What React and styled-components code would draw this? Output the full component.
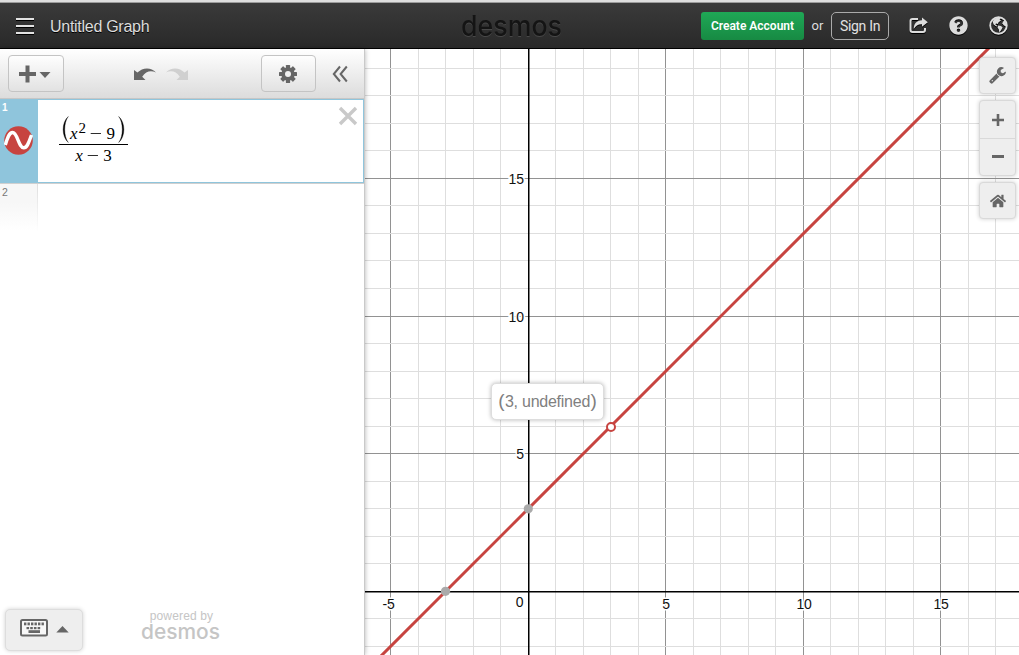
import React from "react";
import styled, { createGlobalStyle } from "styled-components";
import { FaQuestionCircle, FaHome } from "react-icons/fa";

const Global = createGlobalStyle`
  * { box-sizing: border-box; }
  body { margin: 0; overflow: hidden; font-family: "Liberation Sans", Arial, sans-serif; background: #fff; }
  svg { display: block; }
`;

const Page = styled.div`
  display: flex;
  flex-direction: column;
  width: 1019px;
  height: 655px;
  overflow: hidden;
`;

const Header = styled.header`
  height: 49px;
  flex: none;
  display: grid;
  grid-template-columns: 461px 102px 1fr;
  align-items: center;
  border-bottom: 1px solid #000;
  background: linear-gradient(#dedede 2px, #9c9c9c 2px, #9c9c9c 3px, #3a3a3a 3px, #292929 100%);
  color: #ddd;
  padding-top: 3px;
`;

const HeaderLeft = styled.div`
  display: flex;
  align-items: center;
  gap: 16px;
  padding-left: 16px;
`;

const HeaderRight = styled.div`
  display: flex;
  align-items: center;
  justify-content: flex-end;
  padding-right: 11px;
`;

const Burger = styled.div`
  width: 18px;
  height: 16px;
  display: flex;
  flex-direction: column;
  justify-content: space-between;
  span { height: 2px; background: #e2e2e2; box-shadow: 0 1px 0 #000; }
`;

const Title = styled.span`
  font-size: 16px;
  line-height: 20px;
  letter-spacing: -0.28px;
  padding-top: 2px;
  white-space: nowrap;
  text-shadow: 0 1px 0 #000;
`;

const CreateButton = styled.button`
  width: 103px;
  height: 28px;
  padding: 0;
  border: 0;
  border-radius: 3px;
  background: linear-gradient(#1fa856, #178a43);
  color: #fff;
  font: 600 12px Roboto, sans-serif;
  white-space: nowrap;
`;

const Or = styled.span`
  width: 27px;
  text-align: center;
  font: 13px Roboto, sans-serif;
`;

const SignButton = styled.button`
  width: 58px;
  height: 28px;
  padding: 0;
  border: 1px solid #aaa;
  border-radius: 5px;
  background: transparent;
  color: #e2e2e2;
  font: 14px Roboto, sans-serif;
  letter-spacing: -0.3px;
`;

const HeaderIcons = styled.div`
  display: flex;
  align-items: center;
  gap: 21px;
  margin-left: 20px;
  svg { filter: drop-shadow(0 1px 0 #000); }
`;

const Body = styled.main`
  display: flex;
  flex: 1;
  min-height: 0;
`;

const Sidebar = styled.aside`
  width: 365px;
  flex: none;
  display: flex;
  flex-direction: column;
  background: #fff;
  border-right: 1px solid #c9c9c9;
  box-shadow: 0 0 5px rgba(0, 0, 0, 0.3);
  position: relative;
  z-index: 1;
`;

const Toolbar = styled.div`
  height: 50px;
  flex: none;
  display: flex;
  align-items: center;
  padding: 0 16px 0 8px;
  background: linear-gradient(#fff, #dcdcdc);
  border-bottom: 1px solid #c6c6c6;
`;

const ToolButton = styled.button`
  width: ${(p) => p.$width}px;
  height: 37px;
  padding: 0 2px 0 0;
  display: flex;
  align-items: center;
  justify-content: center;
  border: 1px solid #c4c4c4;
  border-radius: 4px;
  background: linear-gradient(#fefefe, #e2e2e2);
`;

const History = styled.div`
  flex: 1;
  display: flex;
  gap: 10px;
  padding: 2px 0 0 70px;
`;

const Collapse = styled.div`
  margin-left: 16px;
`;

const Expression = styled.div`
  height: 84px;
  flex: none;
  display: flex;
  border: 1px solid #8fc5dc;
  border-left: 0;
  box-shadow: 0 1px 0 #d0d0d0;
  position: relative;
`;

const ActiveTab = styled.div`
  width: 38px;
  background: #8fc5dc;
  padding: 2px 0 0 4px;
  display: flex;
  flex-direction: column;
  gap: 12px;
  color: #fff;
  font: bold 10px/12px "Liberation Sans", sans-serif;
`;

const IndexLabel = styled.span`
  display: block;
  margin-left: -2px;
`;

const MathArea = styled.div`
  flex: 1;
  padding: 14px 0 0 21px;
`;

const Fraction = styled.div`
  width: 69px;
  display: flex;
  flex-direction: column;
  align-items: center;
  color: #000;
  font: 17px/20px "Liberation Serif", serif;
  white-space: nowrap;
`;

const Numerator = styled.div`
  width: 100%;
  height: 31px;
  display: flex;
  align-items: center;
  justify-content: space-between;
  padding: 0 3px;
  border-bottom: 1px solid #000;
`;

const NumeratorBody = styled.span`
  padding-top: 9px;
  margin: 0 0 0 -2px;
  sup { font-size: 15px; line-height: 0; vertical-align: 6px; margin-left: 1px; }
`;

const Denominator = styled.div`
  line-height: 21px;
`;

const Op = styled.span`
  display: inline-block;
  margin: 0 6px 0 5px;
  transform: scaleX(1.3);
`;

const Close = styled.div`
  padding: 6px 5px 0 0;
`;

const EmptyTab = styled.div`
  width: 38px;
  height: 48px;
  padding: 3px 0 0 2px;
  color: #777;
  font-size: 10.5px;
  line-height: 12px;
  border-right: 1px solid;
  border-image: linear-gradient(#ddd, #fff) 1;
  background: linear-gradient(#f7f7f7 40%, #fff);
`;

const Footer = styled.div`
  margin-top: auto;
  display: flex;
  align-items: flex-start;
  gap: 58px;
  padding: 0 0 4px 5px;
`;

const KeypadButton = styled.button`
  width: 78px;
  height: 42px;
  padding: 0 0 4px;
  display: flex;
  align-items: center;
  justify-content: center;
  gap: 8px;
  border: 1px solid #ddd;
  border-radius: 5px;
  background: #eee;
  box-shadow: 0 0 4px rgba(0, 0, 0, 0.18);
`;

const Powered = styled.div`
  width: 81px;
  color: #c5c5c5;
  font-size: 12px;
  line-height: 14px;
  letter-spacing: 0.15px;
  text-align: center;
`;

const Logo = styled.svg`
  overflow: visible;
  filter: ${(p) => (p.$shadow ? `drop-shadow(0 1px 0 ${p.$shadow})` : "none")};
  text { font-family: Inter, sans-serif; font-weight: 500; letter-spacing: 0; }
`;

const GraphPaper = styled.section`
  flex: 1;
  position: relative;
  background: #fff;
  overflow: hidden;
`;

const Controls = styled.div`
  position: absolute;
  top: 8px;
  right: 3px;
  width: 37px;
  display: flex;
  flex-direction: column;
  gap: 6px;
`;

const ControlGroup = styled.div`
  border: 1px solid #d9d9d9;
  border-radius: 4px;
  background: #eee;
  box-shadow: 0 0 4px rgba(0, 0, 0, 0.2);
`;

const Control = styled.div`
  height: ${(p) => p.$height || 35}px;
  display: flex;
  align-items: center;
  justify-content: center;
  color: #666;
  & + & { border-top: 1px solid #d9d9d9; }
`;

const Tooltip = styled.div`
  position: absolute;
  left: 126px;
  top: 334px;
  width: 113px;
  height: 37px;
  display: flex;
  align-items: center;
  justify-content: center;
  gap: 0.5px;
  border: 1px solid #ddd;
  border-radius: 5px;
  background: #fff;
  box-shadow: 0 0 4px rgba(0, 0, 0, 0.28);
  color: #808080;
  font-size: 16px;
  letter-spacing: -0.25px;
  white-space: nowrap;
`;

const Paren = styled.span`
  font-size: 19px;
  line-height: 20px;
  letter-spacing: 0;
  margin-top: -2px;
`;

function Wordmark({ width, height, size, baseline, color, shadow }) {
  return (
    <Logo width={width} height={height} $shadow={shadow}>
      <text x="0" y={baseline} fontSize={size} fill={color} textLength={width} lengthAdjust="spacingAndGlyphs">desmos</text>
    </Logo>
  );
}

function ShareIcon() {
  return (
    <svg width="19" height="17" viewBox="0 0 19 17">
      <path d="M9 2H3.5Q1.5 2 1.5 4V13Q1.5 15 3.5 15H14Q16 15 16 13V11" fill="none" stroke="#ddd" strokeWidth="2" />
      <path d="M13 .6L18.8 5.2L13 9.8V7.2C9.2 7 6.8 8.6 4.8 12C4.6 6.8 7.6 3.3 13 3.2Z" fill="#ddd" />
    </svg>
  );
}

function GlobeIcon() {
  return (
    <svg width="19" height="19" viewBox="0 0 19 19">
      <circle cx="9.5" cy="9.5" r="8.3" fill="none" stroke="#ddd" strokeWidth="1.9" />
      <path d="M5 3.2L8.5 1.2L12 1.6L10.6 3.4L12 4.4L9.6 6.2L8.8 8L7 7.6L6.4 8.6L8.2 9.8L7.4 10.4L4.6 8.4L3.6 5.8Z" fill="#ddd" />
      <path d="M9.2 9.6L12 10L13.6 11.6L12.4 13.8L10.4 16.6L9.8 13.6L8.6 11.4Z" fill="#ddd" />
      <path d="M14 5.4L16 4.6L17.6 8.2L16.8 10.6L14.6 9.2L13.4 7.2Z" fill="#ddd" />
    </svg>
  );
}

function WrenchIcon() {
  return (
    <svg width="17" height="17" viewBox="0 0 1683 1683">
      <g transform="translate(10 1420) scale(1 -1)" fill="#666">
        <path fillRule="evenodd" d="M384 64q0 26-19 45t-45 19-45-19-19-45 19-45 45-19 45 19 19 45zM1028 484l-682-682q-37-37-90-37-52 0-91 37L59-90Q21-54 21 0q0 53 38 91l681 681q39-98 114.500-173.500T1028 484zM1662 919q0-39-23-106-47-134-164.500-217.500T1216 512q-185 0-316.500 131.500T768 960t131.500 316.500T1216 1408q58 0 121.500-16.500T1445 1345q16-11 16-28t-16-28l-293-169V896l193-107q5 3 79 48.500t135.500 81T1630 954q15 0 23.500-10t8.500-25z" />
      </g>
    </svg>
  );
}

function HistoryArrow({ flip, color }) {
  return (
    <svg width="22" height="14" viewBox="0 0 22 14">
      <g transform={flip ? "translate(22 0) scale(-1 1)" : undefined}>
        <path d="M0 2L3.4 4.6C8.5-.8 17-1.2 22 4.5C16.8 2.2 12 3.1 8.2 8.7L11.5 12H0Z" fill={color} />
      </g>
    </svg>
  );
}

function GearIcon() {
  return (
    <svg width="20" height="20" viewBox="-10 -10 20 20">
      {[0, 45, 90, 135].map((a) => (
        <rect key={a} x="-2.1" y="-9" width="4.2" height="18" rx=".6" fill="#666" transform={`rotate(${a})`} />
      ))}
      <circle r="6.7" fill="#666" />
      <circle r="3" fill="#f1f1f1" />
    </svg>
  );
}

function KeyboardIcon() {
  return (
    <svg width="28" height="18" viewBox="0 0 28 18">
      <rect x="1" y="1" width="26" height="15.5" rx="1.5" fill="#f7f7f7" stroke="#666" strokeWidth="2" />
      {[4, 7.5, 11, 14.5, 18, 21.5].map((x) => <rect key={x} x={x} y="3.5" width="2.4" height="2.8" fill="#666" />)}
      {[6.5, 10.2, 13.9, 17.6].map((x) => <rect key={x} x={x} y="8" width="2.6" height="2.2" fill="#666" />)}
      <rect x="8.5" y="11.2" width="11.5" height="2.8" fill="#666" />
    </svg>
  );
}

function TallParen({ close }) {
  return (
    <svg width="7" height="27" viewBox="0 0 7 27">
      <path transform={close ? "translate(7 0) scale(-1 1)" : undefined} d="M6.3 .5C-.6 6.5-.6 20.5 6.3 26.5C1.500 20.500 1.500 6.500 6.3.5Z" fill="#000" stroke="#000" strokeWidth=".35" />
    </svg>
  );
}

/* Pixel centre of the grid line for a value on each axis. */
const gx = (n) => Math.floor(163 + 27.5 * n) + 0.5;
const gy = (n) => Math.floor(542.21 - 27.52 * n) + 0.5;
const range = (a, b) => Array.from({ length: b - a + 1 }, (_, i) => a + i);

const Label = styled.text`
  font: 14px "Liberation Sans", sans-serif;
  letter-spacing: -0.2px;
  fill: #111;
  stroke: #fff;
  stroke-width: 3px;
  paint-order: stroke;
`;

function Graph() {
  const stroke = (n) => (n % 5 === 0 ? "#929292" : "#dedede");
  const minorFirst = (a, b) => (a % 5 === 0) - (b % 5 === 0);
  return (
    <svg width="654" height="606">
      {range(-5, 17).sort(minorFirst).map((n) => <path key={`x${n}`} d={`M${gx(n)} 0V606`} stroke={stroke(n)} />)}
      {range(-2, 19).sort(minorFirst).map((n) => <path key={`y${n}`} d={`M0 ${gy(n)}H654`} stroke={stroke(n)} />)}
      {[5, 10, 15].map((n) => <Label key={n} x="158.8" y={gy(n) + 5.5} textAnchor="end">{n}</Label>)}
      {[5, 10, 15].map((n) => <Label key={n} x={gx(n) + 0.5} y="560" textAnchor="middle">{n}</Label>)}
      <Label x="23.6" y="560" textAnchor="middle">-5</Label>
      <Label x="154.6" y="558" textAnchor="middle">0</Label>
      <path d="M163.75 0V606M0 542.75H654" stroke="#000" strokeWidth="1.5" />
      <path d="M13.5 609.5L630.5 -7.5" stroke="#c74440" strokeWidth="3" />
      <circle cx="80.5" cy="542.3" r="4.6" fill="#aaa" />
      <circle cx="163.3" cy="459.8" r="4.6" fill="#aaa" />
      <circle cx="246" cy="378" r="4" fill="#fff" stroke="#c74440" strokeWidth="2" />
    </svg>
  );
}

export default function App() {
  return (
    <Page>
      <Global />
      <Header>
        <HeaderLeft>
          <Burger><span /><span /><span /></Burger>
          <Title>Untitled Graph</Title>
        </HeaderLeft>
        <Wordmark width={101} height={36} size={28} baseline={28} color="#141414" shadow="#484848" />
        <HeaderRight>
          <CreateButton>Create Account</CreateButton>
          <Or>or</Or>
          <SignButton>Sign In</SignButton>
          <HeaderIcons>
            <ShareIcon />
            <FaQuestionCircle size={19} color="#ddd" />
            <GlobeIcon />
          </HeaderIcons>
        </HeaderRight>
      </Header>
      <Body>
        <Sidebar>
          <Toolbar>
            <ToolButton $width={56}>
              <svg width="34" height="20" viewBox="0 0 34 20">
                <path d="M9.5 1.5V18.5M1 10H18" stroke="#666" strokeWidth="4" strokeLinejoin="round" />
                <path d="M21.5 8H32.5L27 14Z" fill="#666" />
              </svg>
            </ToolButton>
            <History>
              <HistoryArrow color="#666" />
              <HistoryArrow flip color="#d0d0d0" />
            </History>
            <ToolButton $width={55}><GearIcon /></ToolButton>
            <Collapse>
              <svg width="16" height="18" viewBox="0 0 16 18" fill="none" stroke="#666" strokeWidth="2">
                <path d="M8 1.5L1.8 9L8 16.5M14.8 1.5L8.6 9L14.8 16.5" />
              </svg>
            </Collapse>
          </Toolbar>
          <Expression>
            <ActiveTab>
              <IndexLabel>1</IndexLabel>
              <svg width="29" height="29" viewBox="0 0 29 29">
                <circle cx="14.5" cy="14.5" r="14.3" fill="#c74440" />
                <path d="M1.3 19C3.8 10.500 5.500 6.500 8.600 6.500C13.500 6.500 14.500 21.800 19.800 21.800C23.500 21.800 25.200 15 27.500 9" fill="none" stroke="#fff" strokeWidth="3.4" />
              </svg>
            </ActiveTab>
            <MathArea>
              <Fraction>
                <Numerator>
                  <TallParen />
                  <NumeratorBody><i>x</i><sup>2</sup><Op>−</Op>9</NumeratorBody>
                  <TallParen close />
                </Numerator>
                <Denominator><i>x</i><Op>−</Op>3</Denominator>
              </Fraction>
            </MathArea>
            <Close>
              <svg width="20" height="20" viewBox="0 0 20 20"><path d="M2 2L18 18M18 2L2 18" stroke="#c9c9c9" strokeWidth="3.4" /></svg>
            </Close>
          </Expression>
          <EmptyTab>2</EmptyTab>
          <Footer>
            <KeypadButton>
              <KeyboardIcon />
              <svg width="13" height="12" viewBox="0 0 13 12"><path d="M.3 10.5L6.5 4L12.7 10.5Z" fill="#666" /></svg>
            </KeypadButton>
            <Powered>
              powered by
              <Wordmark width={79} height={18} size={20.5} baseline={16} color="#c5c5c5" />
            </Powered>
          </Footer>
        </Sidebar>
        <GraphPaper>
          <Graph />
          <Tooltip><Paren>(</Paren>3, undefined<Paren>)</Paren></Tooltip>
          <Controls>
            <ControlGroup><Control><WrenchIcon /></Control></ControlGroup>
            <ControlGroup>
              <Control $height={37}>
                <svg width="12" height="12"><path d="M6 0V12M0 6H12" stroke="#666" strokeWidth="2.6" /></svg>
              </Control>
              <Control $height={37}>
                <svg width="12" height="12"><path d="M0 5.500H12" stroke="#666" strokeWidth="3" /></svg>
              </Control>
            </ControlGroup>
            <ControlGroup><Control><FaHome size={16} /></Control></ControlGroup>
          </Controls>
        </GraphPaper>
      </Body>
    </Page>
  );
}
